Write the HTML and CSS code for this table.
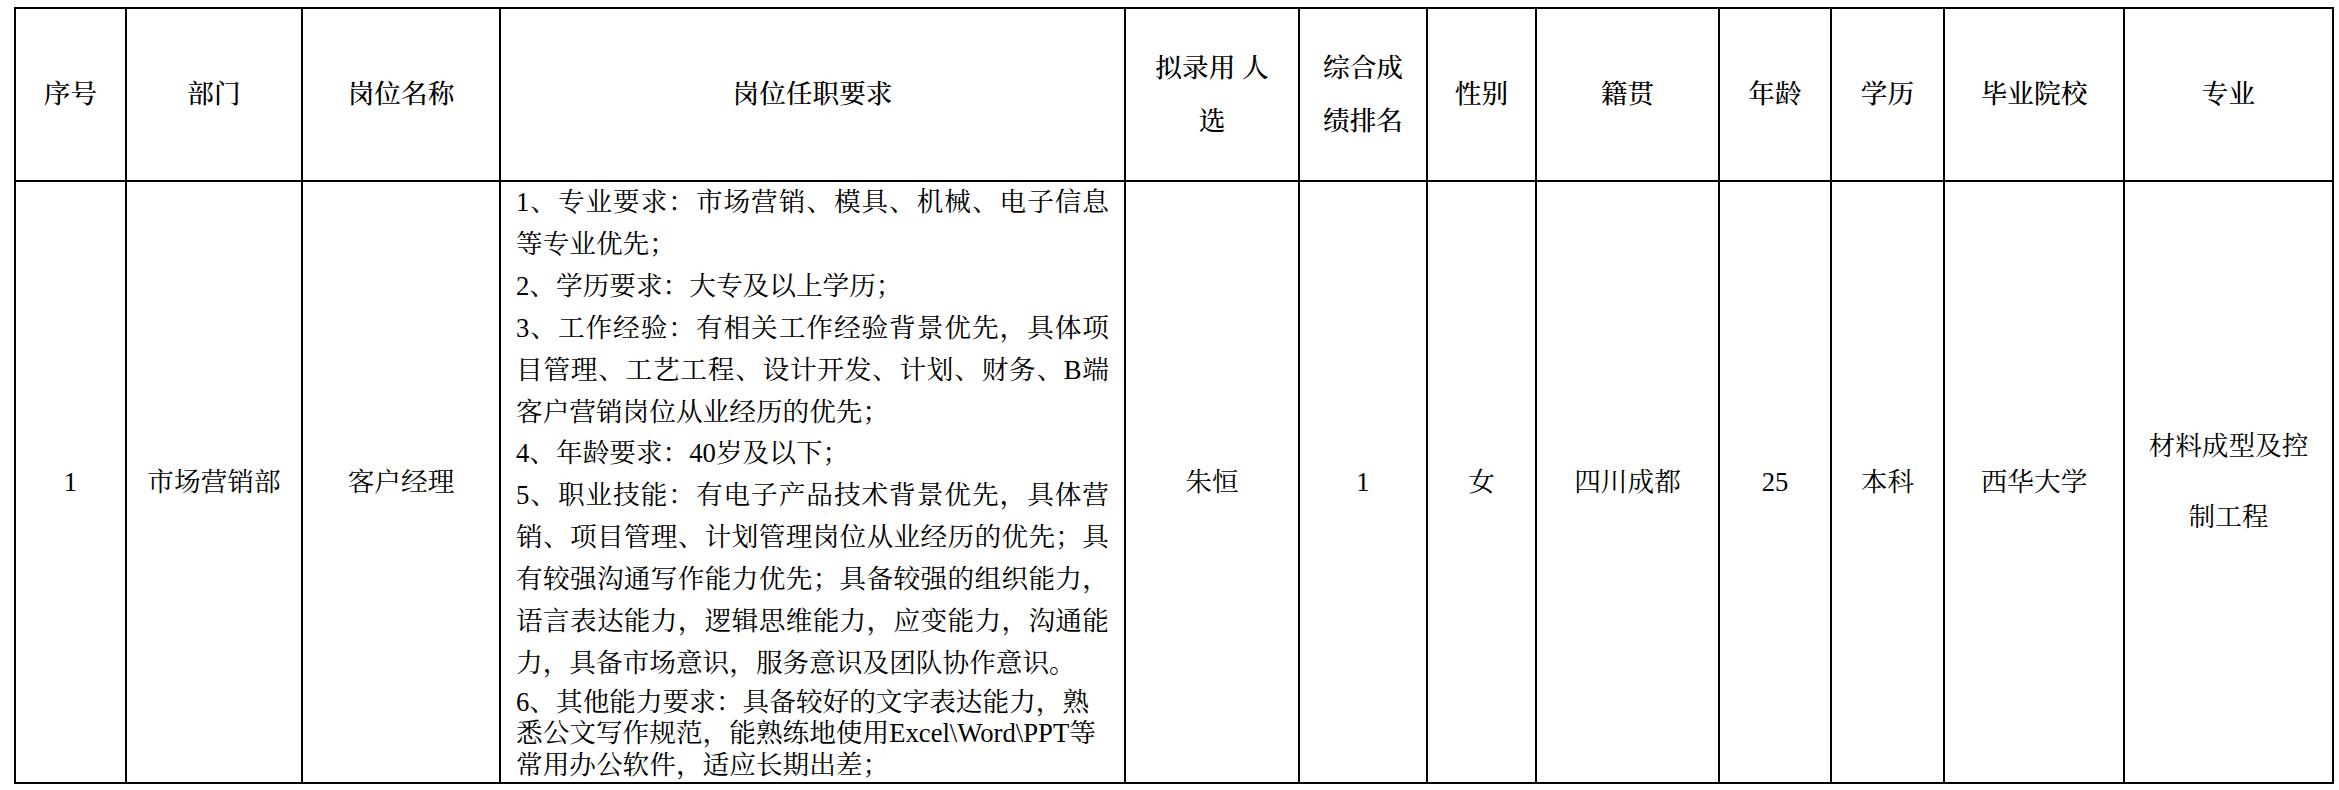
FILE: index.html
```html
<!DOCTYPE html>
<html lang="zh-CN">
<head>
<meta charset="utf-8">
<title>拟录用人员公示</title>
<link rel="stylesheet" href="styles.css">
</head>
<body>
<table class="roster">
  <colgroup>
    <col class="c-no">
    <col class="c-dept">
    <col class="c-post">
    <col class="c-req">
    <col class="c-name">
    <col class="c-rank">
    <col class="c-sex">
    <col class="c-origin">
    <col class="c-age">
    <col class="c-edu">
    <col class="c-school">
    <col class="c-major">
  </colgroup>
  <thead>
    <tr>
      <th>序号</th>
      <th>部门</th>
      <th>岗位名称</th>
      <th>岗位任职要求</th>
      <th>拟录用 人<br>选</th>
      <th>综合成绩排名</th>
      <th>性别</th>
      <th>籍贯</th>
      <th>年龄</th>
      <th>学历</th>
      <th>毕业院校</th>
      <th>专业</th>
    </tr>
  </thead>
  <tbody>
    <tr>
      <td>1</td>
      <td>市场营销部</td>
      <td>客户经理</td>
      <td class="req">
        <p>1、专业要求：市场营销、模具、机械、电子信息等专业优先；</p>
        <p>2、学历要求：大专及以上学历；</p>
        <p>3、工作经验：有相关工作经验背景优先，具体项目管理、工艺工程、设计开发、计划、财务、B端客户营销岗位从业经历的优先；</p>
        <p>4、年龄要求：40岁及以下；</p>
        <p>5、职业技能：有电子产品技术背景优先，具体营销、项目管理、计划管理岗位从业经历的优先；具有较强沟通写作能力优先；具备较强的组织能力，语言表达能力，逻辑思维能力，应变能力，沟通能力，具备市场意识，服务意识及团队协作意识。</p>
        <p class="other">6、其他能力要求：具备较好的文字表达能力，熟悉公文写作规范，能熟练地使用Excel\Word\PPT等常用办公软件，适应长期出差；</p>
      </td>
      <td>朱恒</td>
      <td>1</td>
      <td>女</td>
      <td>四川成都</td>
      <td>25</td>
      <td>本科</td>
      <td>西华大学</td>
      <td>材料成型及控制工程</td>
    </tr>
  </tbody>
</table>
</body>
</html>
```

FILE: styles.css
```css
html, body {
  margin: 0;
  padding: 0;
  background: #ffffff;
}

body {
  color: #000000;
  font-family: "Liberation Serif", "Noto Serif CJK SC", "Noto Sans CJK SC", serif;
  font-size: 26.67px;
}

.roster {
  border-collapse: collapse;
  table-layout: fixed;
  width: 2318px;
  margin: 7px 0 0 14px;
}

.roster th,
.roster td {
  border: 2px solid #000000;
  padding: 0 14px;
  text-align: center;
  vertical-align: middle;
}

.roster th {
  height: 171px;
  font-weight: 500;
  line-height: 53px;
}

.roster td {
  height: 600px;
  font-weight: 400;
  line-height: 71px;
}

.c-no { width: 111px; }
.c-dept { width: 176px; }
.c-post { width: 198px; }
.c-req { width: 625px; }
.c-name { width: 174px; }
.c-rank { width: 128px; }
.c-sex { width: 109px; }
.c-origin { width: 183px; }
.c-age { width: 112px; }
.c-edu { width: 113px; }
.c-school { width: 180px; }
.c-major { width: 209px; }

.roster td.req {
  padding: 0 15px;
  text-align: justify;
  vertical-align: top;
  line-height: 41.9px;
}

.req p {
  margin: 0;
}

.req p.other {
  margin-top: 2px;
  line-height: 31.5px;
  text-align: left;
}
```
